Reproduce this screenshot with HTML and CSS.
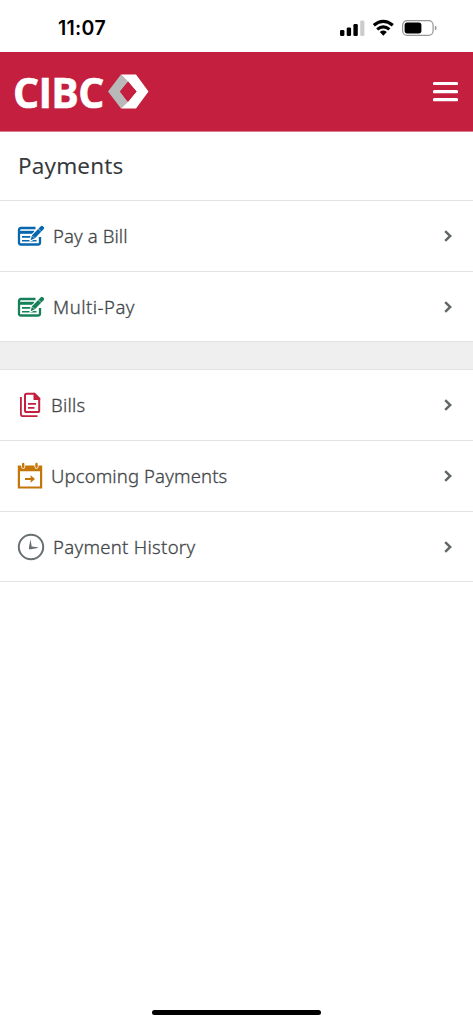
FILE: index.html
```html
<!DOCTYPE html>
<html lang="en">
<head>
<meta charset="utf-8">
<title>Payments</title>
<link rel="stylesheet" href="styles.css">
</head>
<body>
<div class="screen">
  <div class="status">
    <span class="time">11:07</span>
    <svg class="indicators" width="98" height="20" viewBox="0 0 98 20">
      <g fill="#000"><rect x="0" y="11" width="4.400" height="6" rx="1.3"/><rect x="6.700" y="8.500" width="4.400" height="8.500" rx="1.3"/><rect x="13.400" y="5" width="4.400" height="12" rx="1.3"/></g>
      <rect x="20.200" y="1.500" width="4.200" height="15.500" rx="1.3" fill="#ccc"/>
      <g fill="none" stroke="#000" stroke-width="3.200"><path d="M33.800 6.200Q43.300-1.600 52.800 6.200"/><path d="M37.200 10.400Q43.300 5.200 49.400 10.400"/></g>
      <path d="M39.800 13Q43.300 10.200 46.800 13L43.300 16.700Z"/>
      <rect x="62.600" y="1.700" width="30.500" height="14.600" rx="4.500" fill="none" stroke="#969696" stroke-width="1.200"/>
      <rect x="64.600" y="3.600" width="16.800" height="10.800" rx="2.600"/>
      <path d="M94.900 6.800Q96.600 7.200 96.600 9T94.900 11.200Z" fill="#969696"/>
    </svg>
  </div>
  <header class="header">
    <div class="brand">
      <span class="wordmark">CIBC</span>
      <svg width="41" height="36" viewBox="0 0 41 36">
        <path fill="#fff" d="M13 .5H28L40.500 17.500 28 34.500H13L28.500 17.500Z"/>
        <path fill="#b9b9b9" d="M13 .5L20.200 7.600 12 17.500 20 28 13 34.500 0 17.500Z"/>
        <path fill="#c41f3e" d="M20.200 7.600L28.500 17.500 20 28 12 17.500Z"/>
      </svg>
    </div>
    <svg class="menu" width="25" height="22" viewBox="0 0 25 22"><path d="M1.500 2.500H23.500M1.500 10.700H23.500M1.500 18.700H23.500" stroke="#fff" stroke-width="3.200" stroke-linecap="round"/></svg>
  </header>
  <main>
    <h1 class="title">Payments</h1>
    <div class="row blue">
      <svg class="icon" width="28" height="28" viewBox="0 0 28 28"><g fill="none" stroke="currentColor"><path d="M18.500 6H4Q2 6 2 8V20.500Q2 22.500 4 22.500H21Q23 22.500 23 20.500V15" stroke-width="2.300"/><path d="M2 10.300H17" stroke-width="3"/><path d="M5 14.900H13.500M5 18.700H19.500" stroke-width="1.600"/></g><path fill="currentColor" stroke="#fff" stroke-width="2" paint-order="stroke" d="M13.600 18.200L15 13.300 24.100 4.100Q25 3.300 25.900 4.200L26.900 5.200Q27.600 6 26.800 6.900L17.900 16.300Z"/><path d="M21.300 6.800L24 9.500M15.100 13.700L17.600 16.200" stroke="#fff" stroke-width=".6"/></svg>
      <span class="label w-bill">Pay a Bill</span>
      <svg class="chevron" width="10" height="14" viewBox="0 0 10 14"><path d="M2.200 2.200L7.200 7 2.200 11.800"/></svg>
    </div>
    <div class="row green">
      <svg class="icon" width="28" height="28" viewBox="0 0 28 28"><g fill="none" stroke="currentColor"><path d="M18.500 6H4Q2 6 2 8V20.500Q2 22.500 4 22.500H21Q23 22.500 23 20.500V15" stroke-width="2.300"/><path d="M2 10.300H17" stroke-width="3"/><path d="M5 14.900H13.500M5 18.700H19.500" stroke-width="1.600"/></g><path fill="currentColor" stroke="#fff" stroke-width="2" paint-order="stroke" d="M13.600 18.200L15 13.300 24.100 4.100Q25 3.300 25.900 4.200L26.900 5.200Q27.600 6 26.800 6.900L17.900 16.300Z"/><path d="M21.300 6.800L24 9.500M15.100 13.700L17.600 16.200" stroke="#fff" stroke-width=".6"/></svg>
      <span class="label w-multi">Multi-Pay</span>
      <svg class="chevron" width="10" height="14" viewBox="0 0 10 14"><path d="M2.200 2.200L7.200 7 2.200 11.800"/></svg>
    </div>
    <div class="divider"></div>
    <div class="row red short">
      <svg class="icon" width="28" height="28" viewBox="0 0 28 28"><path d="M3.900 6V23Q3.900 25.200 6 25.200H20.500" fill="none" stroke="currentColor" stroke-width="1.800"/><path d="M17.500 2.700H9.500Q8 2.700 8 4.300V19.500Q8 21.100 9.500 21.100H20.700Q22.200 21.100 22.200 19.500V7" fill="none" stroke="currentColor" stroke-width="2"/><path fill="currentColor" d="M16.500 1.700H18L23.200 7V9H16.500Z"/><path d="M11 12.800H19M11 16.900H17.500" fill="none" stroke="currentColor" stroke-width="1.700"/></svg>
      <span class="label w-bills">Bills</span>
      <svg class="chevron" width="10" height="14" viewBox="0 0 10 14"><path d="M2.200 2.200L7.200 7 2.200 11.800"/></svg>
    </div>
    <div class="row orange short">
      <svg class="icon" width="28" height="28" viewBox="0 0 28 28"><path fill="currentColor" fill-rule="evenodd" d="M.8 3.400H25.200V26.600H.8ZM3 9.300V24.500H23V9.300Z"/><path d="M6.200 1.200V4.800M19.500 1.200V4.800" stroke="#fff" stroke-width="4" stroke-linecap="round"/><path d="M6.200 2V4.800M19.500 2V4.800" stroke="currentColor" stroke-width="2.400" stroke-linecap="round"/><path d="M8 17H16.500" stroke="currentColor" stroke-width="2"/><path d="M13.600 13.200L18 17 13.600 20.800V18.500L15 17 13.600 15.500Z" fill="currentColor"/></svg>
      <span class="label w-up">Upcoming Payments</span>
      <svg class="chevron" width="10" height="14" viewBox="0 0 10 14"><path d="M2.200 2.200L7.200 7 2.200 11.800"/></svg>
    </div>
    <div class="row gray">
      <svg class="icon" width="28" height="28" viewBox="0 0 28 28"><circle cx="14" cy="14" r="12.200" fill="none" stroke="currentColor" stroke-width="2"/><path fill="currentColor" d="M13.500 6.300L14.700 13.400 20.800 14.300V14.900L14 16.200H12V14Z"/></svg>
      <span class="label w-hist">Payment History</span>
      <svg class="chevron" width="10" height="14" viewBox="0 0 10 14"><path d="M2.200 2.200L7.200 7 2.200 11.800"/></svg>
    </div>
  </main>
  <div class="home"></div>
</div>
</body>
</html>
```

FILE: styles.css
```css
* { box-sizing: border-box; }
body { margin: 0; background: #fff; font-family: "Noto Sans", sans-serif; }
.screen { height: 1024px; display: flex; flex-direction: column; overflow: hidden; }
.status { height: 52px; flex: none; display: flex; justify-content: space-between; align-items: flex-start; padding: 16px 35px 0 58px; }
.time { font: 600 19.500px/25px Inter, sans-serif; color: #000; letter-spacing: 0.3px; }
.indicators { margin: 3px 0 0; }
.header { height: 80px; flex: none; background: #c41f3e; border-bottom: 1px solid #dc788b; display: flex; justify-content: space-between; align-items: center; padding: 0 15px 0 12px; }
.brand { display: flex; align-items: center; }
.wordmark { width: 96px; padding-left: 1px; font: 700 41px/50px "Open Sans", sans-serif; color: #fff; letter-spacing: -0.7px; white-space: nowrap; -webkit-text-stroke: 0.6px #fff; }
.title { margin: 0; height: 69px; padding: 0 18px; border-bottom: 1px solid #e3e3e3; font-size: 22.500px; line-height: 67px; font-weight: 400; letter-spacing: 0.15px; color: #363a3d; }
.row { height: 70.700px; display: flex; align-items: center; border-bottom: 1px solid #e3e3e3; padding: 0 20px 0 17px; }
.icon { flex: none; margin-right: 8px; }
.short .icon { margin-right: 6px; }
.label { flex: 1; font-size: 18.500px; font-weight: 300; line-height: 26px; white-space: nowrap; color: #43474a; -webkit-text-stroke: 0.3px #43474a; }
.w-bill { letter-spacing: 0.1px; }
.w-multi { letter-spacing: 0.5px; }
.w-bills { letter-spacing: 0.25px; }
.w-up { letter-spacing: 0.13px; }
.w-hist { letter-spacing: 0.3px; }
.chevron { flex: none; fill: none; stroke: #62676a; stroke-width: 2.500; }
.divider { height: 28px; background: #efefef; border-bottom: 1px solid #e3e3e3; }
.blue { color: #0866ad; }
.green { color: #168059; }
.red { color: #c41f3e; }
.orange { color: #c47708; }
.gray { color: #687071; }
.home { width: 169px; height: 5px; margin: auto auto 9px; border-radius: 3px; background: #000; }
```
